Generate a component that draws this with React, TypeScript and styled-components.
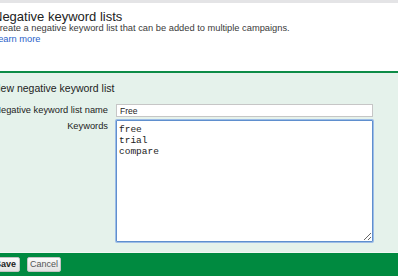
import styled, { createGlobalStyle } from "styled-components"

const Global = createGlobalStyle`
    html, body {
        margin: 0;
        padding: 0;
        background: #fff;
        overflow: hidden;
    }
    body {
        font-family: "Liberation Sans", Arial, sans-serif;
        color: #222;
    }
`

const Page = styled.div`
    width: 405px;
    height: 276px;
    margin-left: -7px;
    display: flex;
    flex-direction: column;
`

const TopStrip = styled.div`
    height: 3px;
    background: #e4e4e6;
`

const Header = styled.div`
    height: 68px;
    padding-top: 7px;
    box-sizing: border-box;
`

const Title = styled.h1`
    margin: 0;
    font-size: 13px;
    font-weight: normal;
    line-height: 13px;
    color: #222;
`

const Description = styled.p`
    margin: 0;
    font-size: 9.3px;
    line-height: 11px;
    color: #3a3a3a;
`

const Link = styled.a`
    display: block;
    font-size: 9.3px;
    line-height: 11px;
    color: #2a62c9;
    text-decoration: none;
`

const Panel = styled.div`
    border-top: 2px solid #0d8c47;
    background: #e5f2eb;
    flex: 1;
    padding-top: 9px;
    border-bottom: 1px solid #f2f8f4;
`

const PanelTitle = styled.h2`
    margin: 0 0 9px 0;
    font-size: 10.5px;
    font-weight: normal;
    line-height: 13px;
    color: #222;
`

const Form = styled.div`
    display: grid;
    grid-template-columns: 115px 257px;
    column-gap: 8px;
    row-gap: 3px;
    align-items: start;
`

const Label = styled.label`
    text-align: right;
    font-size: 9.3px;
    line-height: 13px;
    color: #222;
    white-space: nowrap;
`

const TextInput = styled.input`
    box-sizing: border-box;
    width: 257px;
    height: 13px;
    margin: 0;
    padding: 0 3px;
    border: 1px solid #c6c6c6;
    background: #fff;
    font-family: "Liberation Sans", Arial, sans-serif;
    font-size: 8.5px;
    color: #222;
    outline: none;
`

const Keywords = styled.textarea`
    box-sizing: border-box;
    width: 257px;
    height: 122px;
    margin: 0;
    padding: 3px 2px;
    border: 1px solid #5f8fce;
    box-shadow: 0 0 0 1px #9dbde6;
    border-radius: 1px;
    background: #fff;
    font-family: "Liberation Mono", "Courier New", monospace;
    font-size: 9.5px;
    line-height: 11px;
    color: #222;
    resize: both;
    outline: none;
`

const Footer = styled.div`
    height: 23px;
    background: #008a40;
    display: flex;
    align-items: center;
    gap: 7px;
`

const Button = styled.button<{ $primary?: boolean }>`
    height: 15px;
    margin-left: ${(p) => (p.$primary ? "-2px" : "0")};
    padding: 0 ${(p) => (p.$primary ? "3px" : "2px")};
    border: 1px solid #c4c4c4;
    border-radius: 2px;
    background: linear-gradient(#fbfbfb, #e3e3e3);
    font-family: "Liberation Sans", Arial, sans-serif;
    font-size: 9px;
    font-weight: ${(p) => (p.$primary ? "bold" : "normal")};
    color: ${(p) => (p.$primary ? "#222" : "#555")};
    line-height: 13px;
`

export default function App() {
    return <Page>
        <Global />
        <TopStrip />
        <Header>
            <Title>Negative keyword lists</Title>
            <Description>Create a negative keyword list that can be added to multiple campaigns.</Description>
            <Link href="#">Learn more</Link>
        </Header>
        <Panel>
            <PanelTitle>New negative keyword list</PanelTitle>
            <Form>
                <Label>Negative keyword list name</Label>
                <TextInput defaultValue="Free" />
                <Label>Keywords</Label>
                <Keywords defaultValue={"free\ntrial\ncompare"} autoFocus />
            </Form>
        </Panel>
        <Footer>
            <Button $primary>Save</Button>
            <Button>Cancel</Button>
        </Footer>
    </Page>
}
